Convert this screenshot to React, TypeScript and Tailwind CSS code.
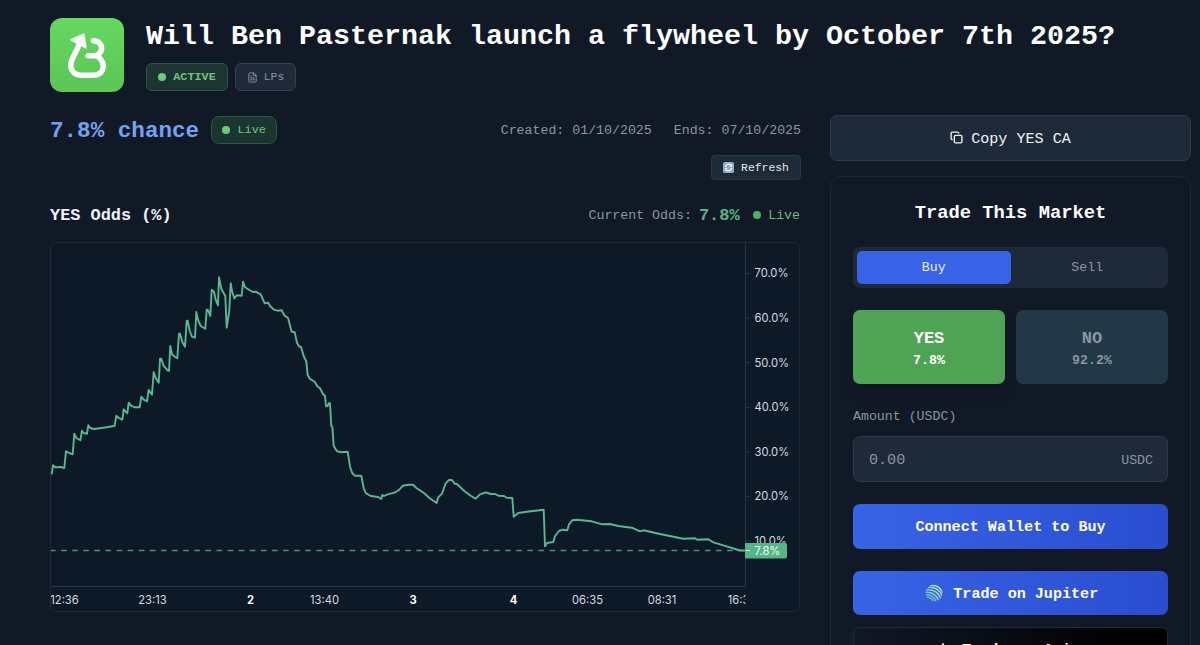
import { useState } from "react";
import { Copy, FileText } from "lucide-react";

// [x, y] in chart pixels
const ODDS_LINE: [number, number][] = [
  [1.7, 232.3], [3, 223.3], [5.3, 225.3], [11, 225], [14.3, 226], [16, 209.3], [19.3, 211], [22.7, 212.3],
  [24.3, 191.7], [26.3, 196], [30.3, 198.3], [32, 188.7], [33.7, 191], [37, 191.7], [38.3, 183.3], [40.3, 186],
  [44, 187], [53.3, 185.7], [58.3, 185], [64.7, 183.7], [66.3, 173.7], [68.7, 176], [72.3, 177.7], [73.7, 167.3],
  [77.3, 171.3], [78.7, 160.7], [81, 163.7], [85, 165.3], [89.7, 165.3], [91.3, 154.7], [93.7, 157.7], [97, 159.3],
  [98.7, 148], [102, 152.7], [103.7, 130], [105.7, 136], [108.7, 140.7], [110, 116.7], [111.3, 116.7], [113.7, 124],
  [118, 128.7], [119, 128.7], [120.3, 104], [122, 112.3], [124.7, 114.7], [127.3, 116.3], [129, 91.7], [130, 91.7],
  [132.3, 100], [135, 104.7], [136.7, 78.7], [137.7, 78.7], [139.7, 89], [142, 94.7], [145, 95.7], [146.3, 70],
  [148, 78], [150.7, 84], [155.3, 86.7], [156.7, 67.7], [157.7, 67.7], [160.3, 74], [161.7, 47.7], [164, 49.7],
  [165.7, 57.7], [168, 63.3], [169, 35.3], [171.3, 46.7], [175.3, 54], [176.7, 85.7], [179.3, 68.7], [180.7, 41.3],
  [182.3, 50.3], [184.3, 56.3], [186.7, 53.3], [191.7, 53.7], [193.1, 39.7], [195, 45.3], [199.3, 48], [203.3, 50],
  [205.7, 49.7], [210.7, 52.3], [214.7, 61.3], [218.3, 60.7], [220, 64], [224, 67.7], [227.3, 68.7], [231.7, 68.3],
  [234.7, 73.7], [238, 76], [241.7, 89.7], [244.7, 90.3], [247, 100.7], [249, 104.3], [251, 105], [254, 115],
  [256.3, 119.3], [257.7, 133], [260, 137], [264.7, 139.7], [267.3, 144.3], [270, 146.3], [273, 152], [275, 153.7],
  [276, 164.3], [277.7, 164], [278.7, 161.3], [280, 161.3], [281.3, 184], [282.3, 184.7], [283.7, 204], [287, 209.3],
  [291.3, 210.3], [297.7, 209.7], [300, 224.7], [302.3, 231.3], [305, 233.7], [311.3, 233.7], [313.7, 246.3],
  [316, 251.3], [320.7, 254], [328.3, 255], [331.3, 257], [332.3, 253], [334, 254], [337.7, 252.3], [344.3, 250.7],
  [349.3, 247.7], [353, 243.7], [358.3, 242.7], [363, 242.7], [366.7, 246.3], [374.3, 251.3], [379.7, 256.3],
  [386.7, 261], [388, 255.7], [392, 251.7], [395.7, 241.3], [399.3, 237.7], [402.3, 238.3], [404.7, 241.7],
  [407, 242], [414, 248.7], [420.7, 253.7], [425.7, 256.7], [430, 252.3], [435.7, 250.3], [440.7, 252], [445, 252],
  [448.3, 253.7], [454, 254], [456.7, 255.7], [462.3, 256], [463.7, 274.7], [468.3, 271], [476.7, 269.7],
  [493.7, 267.7], [495, 304.3], [497, 301], [503.3, 300], [505, 294], [509, 289], [512.3, 287.7], [517.3, 288.3],
  [519, 282.3], [522.3, 278.3], [526.7, 277.7], [541.7, 279.3], [552.3, 282.3], [560, 282], [568.3, 284],
  [581.7, 285.7], [590, 289.3], [593.3, 288.3], [610, 292], [633.3, 296.7], [645, 296.3], [647.3, 297.7],
  [658.3, 297.3], [663.3, 300.3], [676.7, 304.3], [690, 308.5], [695, 308.5],
];

const Y_LABELS = ["70.0%", "60.0%", "50.0%", "40.0%", "30.0%", "20.0%", "10.0%"];

const X_LABELS = [
  { x: 14.5, text: "12:36" },
  { x: 102.5, text: "23:13" },
  { x: 200.5, text: "2", bold: true },
  { x: 274.5, text: "13:40" },
  { x: 363, text: "3", bold: true },
  { x: 463.5, text: "4", bold: true },
  { x: 537.5, text: "06:35" },
  { x: 612, text: "08:31" },
  { x: 692, text: "16:33" },
];

function MarketLogo() {
  return (
    <svg
      viewBox="0 0 74 74"
      className="size-[74px] shrink-0 rounded-[12px] bg-linear-to-b from-[#65d861] to-[#5bc656]"
      fill="none"
      stroke="#fff"
      strokeWidth="5.5"
      strokeLinecap="round"
      strokeLinejoin="round"
    >
      <path d="M29.5 26 L22.3 41 C18.5 49.5 22.5 57.2 31 57.2 H43.5 C52.5 57.2 56 48 50.8 41.6 L47.8 38" />
      <path d="M43.6 22.8 C50.7 23 52.7 29.2 51 33 C49.7 36.4 47.2 37.8 43.5 37.8 H38.3" />
      <path d="M33.6 16.2 L21 21.8 L36 29.8 Z" fill="#fff" strokeWidth="1.6" />
    </svg>
  );
}

function RefreshEmoji() {
  return (
    <svg viewBox="0 0 12 12" className="size-[11px]">
      <rect width="12" height="12" rx="2" fill="#8fa9c6" />
      <g fill="none" stroke="#f2f7fc" strokeWidth="1.5">
        <path d="M2.6 5.6 A3.4 3.4 0 0 1 8.6 3.6" />
        <path d="M9.4 6.4 A3.4 3.4 0 0 1 3.4 8.4" />
      </g>
      <path d="M9.9 2.2 V5.2 H6.9 Z M2.1 9.8 V6.8 H5.1 Z" fill="#f2f7fc" />
    </svg>
  );
}

function JupiterLogo() {
  return (
    <svg viewBox="0 0 18 18" className="size-[18px]" fill="none" strokeWidth="1.5">
      <defs>
        <linearGradient id="jup" x1="2" y1="16" x2="15" y2="2" gradientUnits="userSpaceOnUse">
          <stop stopColor="#4cb6dc" />
          <stop offset="1" stopColor="#c8eeb4" />
        </linearGradient>
        <clipPath id="jup-clip">
          <circle cx="9" cy="9" r="8.5" />
        </clipPath>
      </defs>
      <g stroke="url(#jup)" clipPath="url(#jup-clip)">
        <path d="M5 1.4 C10.5 0.6 15.5 3.5 18 9" />
        <path d="M2.5 3.6 C9.5 2.4 15.3 6 17.4 12.4" />
        <path d="M1 6 C8 4.8 14 8.5 15.8 15" />
        <path d="M0 8.5 C6.6 7.4 12 10.8 13.6 17" />
        <path d="M0 11 C5.4 10.2 9.7 12.8 11 18" />
        <path d="M0.6 13.4 C4.5 13 7.4 14.6 8.4 18" />
      </g>
    </svg>
  );
}

function AxiomLogo() {
  return (
    <svg viewBox="0 0 18 18" className="size-[18px]" fill="#fff">
      <path d="M9 1.6 L13 9 H5 Z M4 11 H14 L17 16.5 H1 Z" />
    </svg>
  );
}

function OddsChart() {
  return (
    <div className="h-[370px] w-[750px] overflow-hidden rounded-md border border-[#1c2a39] bg-[#0d1927]">
      <svg viewBox="1 1 748 368" className="h-full w-full font-[Inter,sans-serif] text-[11.2px]">
        <g stroke="#273644">
          <path d="M695.5 0 V344.5 M0 344.5 H695.5" fill="none" />
          {Y_LABELS.map((label, i) => (
            <path key={label} d={`M696 ${31.5 + i * 44.6} h4`} />
          ))}
        </g>
        <path d="M0 308.5 H695" stroke="#4b8f7d" strokeWidth="1.3" strokeDasharray="5.6 5.5" />
        <polyline
          points={ODDS_LINE.map((p) => p.join(",")).join(" ")}
          fill="none"
          stroke="#59b890"
          strokeWidth="1.9"
          strokeLinejoin="round"
        />
        <g fill="#d5dbe2">
          {Y_LABELS.map((label, i) => (
            <text key={label} x="704.5" y={35.3 + i * 44.6}>
              {label}
            </text>
          ))}
        </g>
        <clipPath id="time-axis">
          <rect x="0" y="345" width="695.5" height="25" />
        </clipPath>
        <g textAnchor="middle" clipPath="url(#time-axis)">
          {X_LABELS.map(({ x, text, bold }) => (
            <text key={text} x={x} y="361.5" fill={bold ? "#fff" : "#d5dbe2"} fontWeight={bold ? 700 : 400}>
              {text}
            </text>
          ))}
        </g>
        <path d="M695 301 h40 a2 2 0 0 1 2 2 v11.5 a2 2 0 0 1 -2 2 h-40 Z" fill="#55b586" />
        <path d="M696 308.5 h4" stroke="#dff3e9" />
        <text x="704.5" y="312.8" fill="#f0faf5">
          7.8%
        </text>
      </svg>
    </div>
  );
}

export default function App() {
  const [mode, setMode] = useState<"buy" | "sell">("buy");
  const [amount, setAmount] = useState("");

  return (
    <main className="h-[645px] overflow-hidden bg-[#111927] pl-[50px] font-['Liberation_Mono',monospace] text-[13.25px] leading-none text-[#8b94a3]">
      <header className="flex gap-[22px] pt-[18px]">
        <MarketLogo />
        <div>
          <h1 className="flex h-9 items-center pt-[3px] text-[28.34px] font-bold whitespace-nowrap text-white">
            Will Ben Pasternak launch a flywheel by October 7th 2025?
          </h1>
          <div className="mt-[9px] flex gap-[7px]">
            <span className="flex h-7 w-[82px] items-center justify-center gap-[7px] rounded-md border border-[#2b5740] bg-[#1c3432] text-[11.8px] font-bold text-[#6cc382]">
              <i className="size-2 rounded-full bg-[#6ccb7c]" />
              <span className="pt-[2px]">ACTIVE</span>
            </span>
            <span className="flex h-7 w-[61px] items-center justify-center gap-1.5 rounded-md border border-[#324050] bg-[#1e2a3a] text-[11.3px]">
              <FileText size={11} />
              <span className="pt-[2px]">LPs</span>
            </span>
          </div>
        </div>
      </header>

      <div className="mt-[22.5px] flex gap-[29px]">
        <section className="w-[751px] shrink-0">
          <div className="flex h-[30px] items-center">
            <span className="pt-[3px] text-[22.6px] font-bold text-[#74a3ee]">7.8% chance</span>
            <span className="ml-3 flex h-7 w-[66px] items-center justify-center gap-[7px] rounded-lg border border-[#2b5740] bg-[#1c3432] text-[11.8px] text-[#6cc382]">
              <i className="size-2 rounded-full bg-[#6ccb7c]" />
              <span className="pt-[3px]">Live</span>
            </span>
            <span className="ml-auto pt-[3px]">Created: 01/10/2025</span>
            <span className="ml-[22px] pt-[3px]">Ends: 07/10/2025</span>
          </div>

          <div className="mt-[10.5px] flex justify-end">
            <button className="flex h-[25px] w-[90px] items-center justify-center gap-[7px] rounded border border-[#2a3947] bg-[#1d2a38] text-[11.4px] text-[#e3e8ee]">
              <RefreshEmoji />
              <span className="pt-[2px]">Refresh</span>
            </button>
          </div>

          <div className="mt-[22.5px] mb-[15px] flex h-6 items-center pr-px">
            <h2 className="pt-[4px] text-[16.9px] font-bold text-[#eef2f6]">YES Odds (%)</h2>
            <span className="ml-auto pt-[2px]">Current Odds:</span>
            <span className="ml-[7px] pt-px text-[17px] font-bold text-[#55b586]">7.8%</span>
            <i className="mr-[7px] ml-[13.5px] size-2 rounded-full bg-[#4fb05f]" />
            <span className="pt-[2px] text-[#68bd7e]">Live</span>
          </div>

          <OddsChart />
        </section>

        <aside className="w-[361px] shrink-0">
          <button className="flex h-[46px] w-full items-center justify-center gap-2 rounded-[7px] border border-[#2c3a48] bg-[#1e2a39] text-[15.1px] text-[#eef2f6]">
            <Copy size={13} strokeWidth={2.5} />
            <span className="pt-[4px]">Copy YES CA</span>
          </button>

          <div className="mt-[15.5px] h-[520px] rounded-[11px] border border-[#1c2836] px-[22px] pt-[24px]">
            <h2 className="text-center text-[18.8px] leading-6 font-bold text-white">Trade This Market</h2>

            <div className="mt-[21.5px] flex h-[41px] rounded-[7px] bg-[#1e2a39] p-1">
              <button
                onClick={() => setMode("buy")}
                className={`flex-1 rounded-[5px] pt-[2px] ${mode === "buy" ? "bg-[#3963e6] text-[#eaf0fd]" : ""}`}
              >
                Buy
              </button>
              <button
                onClick={() => setMode("sell")}
                className={`flex-1 rounded-[5px] pt-[2px] ${mode === "sell" ? "bg-[#3963e6] text-[#eaf0fd]" : ""}`}
              >
                Sell
              </button>
            </div>

            <div className="mt-[22px] grid grid-cols-2 gap-[11px] font-bold">
              <button className="flex h-[74px] flex-col items-center justify-center gap-[7px] rounded-[7px] bg-[#4fa355] pt-[4px] text-white shadow-lg">
                <span className="text-[17px]">YES</span>
                <span>7.8%</span>
              </button>
              <button className="flex h-[74px] flex-col items-center justify-center gap-[7px] rounded-[7px] bg-[#223847] pt-[4px]">
                <span className="text-[17px]">NO</span>
                <span>92.2%</span>
              </button>
            </div>

            <p className="mt-[26px]">Amount (USDC)</p>
            <label className="mt-[13px] flex h-[46px] items-center rounded-[7px] border border-[#2c3a48] bg-[#1e2a39] pr-3.5 pl-[15px]">
              <input
                value={amount}
                onChange={(e) => setAmount(e.target.value)}
                placeholder="0.00"
                className="min-w-0 flex-1 pt-[3px] text-[15.1px] outline-none placeholder:text-[#8b94a3]"
              />
              <span className="pt-[3px]">USDC</span>
            </label>

            <div className="mt-[22px] flex flex-col text-[15.1px] font-bold text-white">
              <button className="h-[45px] rounded-[7px] bg-linear-to-r/srgb from-[#3963e6] to-[#2a4dcf] pt-[3px]">
                Connect Wallet to Buy
              </button>
              <button className="mt-[22px] flex h-[44.5px] items-center justify-center gap-[10.5px] rounded-[7px] bg-linear-to-r/srgb from-[#3963e6] to-[#2a4dcf] pl-[2px]">
                <JupiterLogo />
                <span className="pt-[3px]">Trade on Jupiter</span>
              </button>
              <button className="mt-[11.5px] flex h-[47px] items-center justify-center gap-[10px] rounded-[7px] border border-[#1f2937] bg-linear-to-r/srgb from-[#111827] to-black to-90% pl-[2px]">
                <AxiomLogo />
                <span className="pt-px">Trade on Axiom</span>
              </button>
            </div>
          </div>
        </aside>
      </div>
    </main>
  );
}
